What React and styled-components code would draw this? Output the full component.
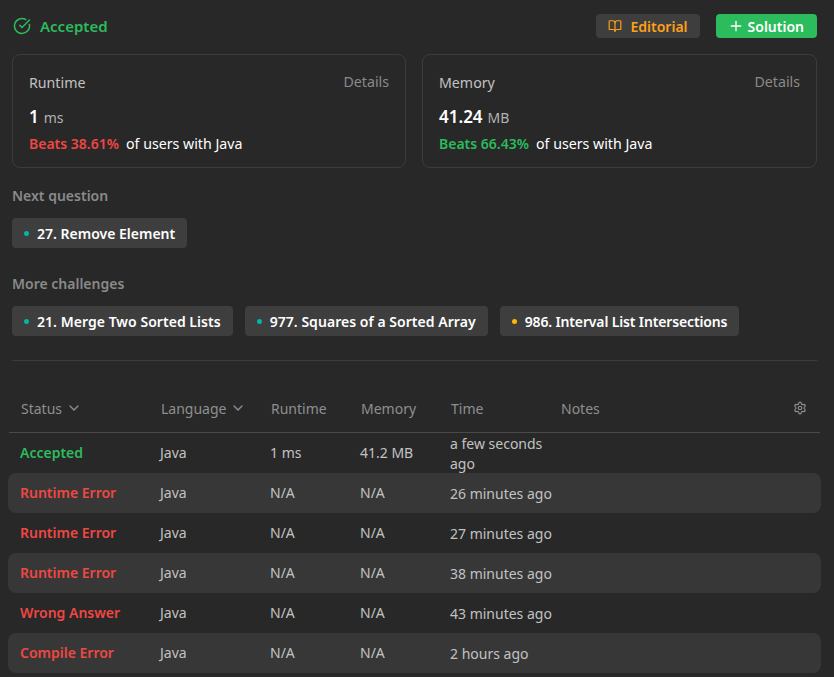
import React from 'react';
import styled, { createGlobalStyle } from 'styled-components';
import { BookOpen, ChevronDown, CircleCheckBig, Plus, Settings } from 'lucide-react';

// ============================================================ data

const NEXT = [{ title: '27. Remove Element', level: 'easy', tracking: 0 }];

const MORE = [
    { title: '21. Merge Two Sorted Lists', level: 'easy', tracking: 0.04 },
    { title: '977. Squares of a Sorted Array', level: 'easy', tracking: 0.04 },
    { title: '986. Interval List Intersections', level: 'medium', tracking: -0.14 },
];

const ROWS = [
    { status: 'Accepted', ok: true, runtime: '1 ms', memory: '41.2 MB', time: 'a few seconds ago' },
    { status: 'Runtime Error', runtime: 'N/A', memory: 'N/A', time: '26 minutes ago' },
    { status: 'Runtime Error', runtime: 'N/A', memory: 'N/A', time: '27 minutes ago' },
    { status: 'Runtime Error', runtime: 'N/A', memory: 'N/A', time: '38 minutes ago' },
    { status: 'Wrong Answer', runtime: 'N/A', memory: 'N/A', time: '43 minutes ago' },
    { status: 'Compile Error', runtime: 'N/A', memory: 'N/A', time: '2 hours ago' },
];

// ============================================================ styles

const GlobalStyle = createGlobalStyle`
   html, body {
      margin: 0;
      height: 100%;
      background: #282828;
   }
   * { box-sizing: border-box; }
`;

const Page = styled.div`
   width: 834px;
   height: 677px;
   overflow: hidden;
   padding: 14px 17px 0 12px;
   color: #fff;
   font-family: "Noto Sans", "Open Sans", sans-serif;
   font-size: 14px;
`;

const Header = styled.div`
   display: flex;
   justify-content: space-between;
   align-items: center;
   height: 24px;
`;

const Verdict = styled.div`
   display: flex;
   align-items: center;
   gap: 9px;
   padding-left: 1px;
   color: #2cbb5d;
   font-size: 15px;
   font-weight: 600;
`;

const Actions = styled.div`
   display: flex;
   gap: 16px;
`;

const ActionButton = styled.div`
   display: flex;
   align-items: center;
   height: 24px;
   border-radius: 4px;
   font-size: 14px;
   font-weight: 600;
   background: ${(p) => (p.$primary ? '#2cbb5d' : '#3e3e3e')};
   color: ${(p) => (p.$primary ? '#fff' : '#ffa116')};
   padding: ${(p) => (p.$primary ? '0 13px 0 12px' : '0 12px')};
   gap: ${(p) => (p.$primary ? '4px' : '8px')};
`;

const Cards = styled.div`
   display: grid;
   grid-template-columns: 394px 395px;
   gap: 16px;
   margin-top: 16px;
`;

const Card = styled.div`
   height: 114px;
   padding: 18px 16px 0;
   border: 1px solid #3c3c3c;
   border-radius: 8px;
   font-size: 14.2px;
`;

const CardTop = styled.div`
   display: flex;
   justify-content: space-between;
   color: #c2c2c2;
   line-height: 20px;
`;

const Details = styled.span`
   color: #8a8a8a;
   margin-top: -1px;
`;

const Metric = styled.div`
   margin-top: 12px;
   line-height: 24px;
   color: #b3b3b3;
   font-size: 14px;
`;

const MetricValue = styled.span`
   margin-right: 5px;
   color: #fff;
   font-size: 17px;
   font-weight: 600;
`;

const Beats = styled.div`
   margin-top: 4px;
   line-height: 20px;
`;

const BeatsValue = styled.span`
   margin-right: 7px;
   color: ${(p) => (p.$good ? '#2cbb5d' : '#ef4743')};
   font-size: 14px;
   font-weight: 600;
`;

const SectionTitle = styled.div`
   margin-top: ${(p) => p.$top}px;
   margin-bottom: 12px;
   color: #8a8a8a;
   font-weight: 600;
   line-height: 20px;
`;

const Tags = styled.div`
   display: flex;
   gap: 12px;
`;

const Tag = styled.div`
   display: flex;
   align-items: center;
   height: 30px;
   padding: 0 12px;
   gap: 8px;
   border-radius: 4px;
   background: #3e3e3e;
   font-weight: 600;
   letter-spacing: ${(p) => p.$tracking}px;
`;

const Dot = styled.span`
   width: 5px;
   height: 5px;
   border-radius: 50%;
   background: ${(p) => (p.$level === 'medium' ? '#ffb800' : '#00b8a3')};
`;

const Divider = styled.div`
   height: 1px;
   margin-top: 24px;
   background: #3c3c3c;
`;

const Table = styled.div`
   width: 813px;
   margin: 25px 0 0 -4px;
`;

const HeadRow = styled.div`
   display: grid;
   grid-template-columns: 140px 110px 90px 90px 110px 1fr auto;
   align-items: center;
   height: 47px;
   margin: 0 1px;
   padding: 0 13px 2px 12px;
   border-bottom: 1px solid #4a4a4a;
   color: #8f8f8f;
`;

const HeadCell = styled.div`
   display: flex;
   align-items: center;
   gap: 4px;
`;

const Row = styled.div`
   display: grid;
   grid-template-columns: 140px 110px 90px 90px 110px 1fr;
   grid-template-rows: 38px;
   align-items: center;
   height: 40px;
   padding-left: 12px;
   border-radius: 8px;
   color: #c2c2c2;
   background: ${(p) => (p.$striped ? '#373737' : 'transparent')};
`;

const Status = styled.div`
   color: ${(p) => (p.$ok ? '#2cbb5d' : '#ef4743')};
   font-weight: 600;
`;

const TimeCell = styled.div`
   padding-top: 4px;
   line-height: 20px;
`;

// ============================================================ component

const Question = ({ title, level, tracking }) => (
    <Tag $tracking={tracking}><Dot $level={level} />{title}</Tag>
);

const App = () => {
    return (
        <Page>
            <GlobalStyle />

            <Header>
                <Verdict>
                    <CircleCheckBig size={18} strokeWidth={2} />
                    Accepted
                </Verdict>
                <Actions>
                    <ActionButton>
                        <BookOpen size={14} />
                        Editorial
                    </ActionButton>
                    <ActionButton $primary>
                        <Plus size={16} />
                        Solution
                    </ActionButton>
                </Actions>
            </Header>

            <Cards>
                <Card>
                    <CardTop>Runtime<Details>Details</Details></CardTop>
                    <Metric><MetricValue>1</MetricValue>ms</Metric>
                    <Beats><BeatsValue>Beats 38.61%</BeatsValue>of users with Java</Beats>
                </Card>
                <Card>
                    <CardTop>Memory<Details>Details</Details></CardTop>
                    <Metric><MetricValue>41.24</MetricValue>MB</Metric>
                    <Beats><BeatsValue $good>Beats 66.43%</BeatsValue>of users with Java</Beats>
                </Card>
            </Cards>

            <SectionTitle $top={18}>Next question</SectionTitle>
            <Tags>
                {NEXT.map((q) => <Question key={q.title} {...q} />)}
            </Tags>

            <SectionTitle $top={26}>More challenges</SectionTitle>
            <Tags>
                {MORE.map((q) => <Question key={q.title} {...q} />)}
            </Tags>

            <Divider />

            <Table>
                <HeadRow>
                    <HeadCell>Status <ChevronDown size={16} /></HeadCell>
                    <HeadCell>Language <ChevronDown size={16} /></HeadCell>
                    <HeadCell>Runtime</HeadCell>
                    <HeadCell>Memory</HeadCell>
                    <HeadCell>Time</HeadCell>
                    <HeadCell>Notes</HeadCell>
                    <Settings size={14} />
                </HeadRow>
                {ROWS.map((row, i) => (
                    <Row key={i} $striped={i % 2 === 1}>
                        <Status $ok={row.ok}>{row.status}</Status>
                        <div>Java</div>
                        <div>{row.runtime}</div>
                        <div>{row.memory}</div>
                        <TimeCell>{row.time}</TimeCell>
                        <div />
                    </Row>
                ))}
            </Table>
        </Page>
    );
};

// ============================================================

export default App;
